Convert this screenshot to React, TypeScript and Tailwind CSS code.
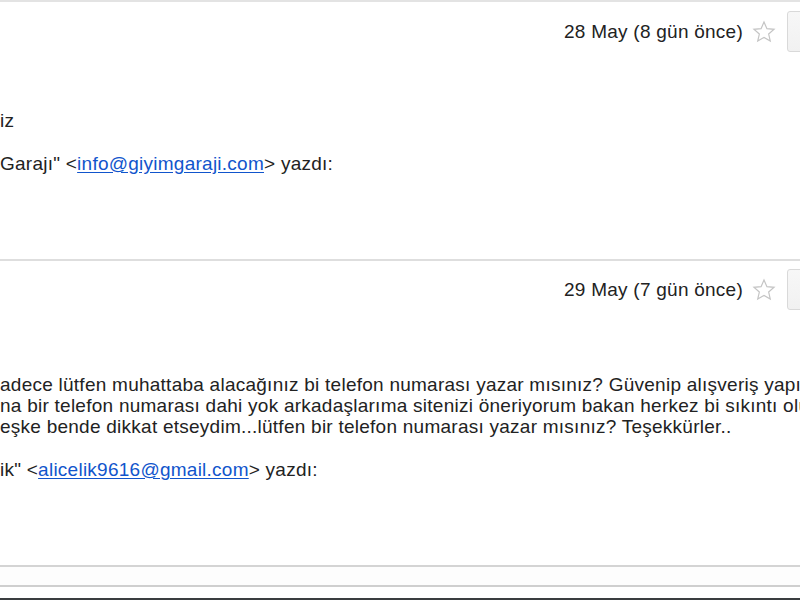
import React from "react";

function Star() {
    return (
        <svg width="26" height="26" viewBox="0 0 24 24" className="shrink-0">
            <path
                d="M12 2.8l2.7 6.1 6.6.6-5 4.4 1.5 6.5L12 17l-5.8 3.4 1.5-6.5-5-4.4 6.6-.6z"
                fill="none"
                stroke="#c4c4c4"
                strokeWidth="1.1"
                strokeLinejoin="miter"
            />
        </svg>
    );
}

function HeaderRow({ date }: { date: string }) {
    return (
        <div className="flex items-center justify-end h-[41px]">
            <span className="text-[#222] text-[19px] mr-[8px]">{date}</span>
            <Star />
            <div className="ml-[10px] w-[30px] h-[41px] -mr-[17px] rounded-[3px] border border-[#d9d9d9] bg-gradient-to-b from-[#f7f7f7] to-[#f1f1f1]" />
        </div>
    );
}

function Link({ children }: { children: React.ReactNode }) {
    return <a className="text-[#1155cc] underline underline-offset-2">{children}</a>;
}

export default function App() {
    return (
        <div
            className="w-[800px] h-[600px] bg-white overflow-hidden flex flex-col text-[19px] tracking-[0.25px] text-[#222] leading-[21px]"
            style={{ fontFamily: '"Liberation Sans", Arial, sans-serif' }}
        >
            {/* first message */}
            <div className="border-t-2 border-[#e3e3e3] h-[259px] shrink-0 pt-[9px] whitespace-nowrap">
                <HeaderRow date="28 May (8 gün önce)" />
                <div className="mt-[58px]">iz</div>
                <div className="mt-[22px]">
                    Garajı" &lt;<Link>info@giyimgaraji.com</Link>&gt; yazdı:
                </div>
            </div>

            {/* second message */}
            <div className="border-t-2 border-[#dedede] h-[306px] shrink-0 pt-[8px] whitespace-nowrap">
                <HeaderRow date="29 May (7 gün önce)" />
                <div className="mt-[64px]">
                    <div>adece lütfen muhattaba alacağınız bi telefon numarası yazar mısınız? Güvenip alışveriş yapı</div>
                    <div>na bir telefon numarası dahi yok arkadaşlarıma sitenizi öneriyorum bakan herkez bi sıkıntı olu</div>
                    <div>eşke bende dikkat etseydim...lütfen bir telefon numarası yazar mısınız? Teşekkürler..</div>
                </div>
                <div className="mt-[22px]">
                    ik" &lt;<Link>alicelik9616@gmail.com</Link>&gt; yazdı:
                </div>
            </div>

            {/* collapsed row */}
            <div className="border-t-2 border-[#d4d4d4] h-[20px] shrink-0 bg-[#fdfdfd]" />
            <div className="border-t-2 border-[#cfcfcf] flex-1 bg-white" />
            <div className="h-[2px] bg-[#3a3d40] shrink-0" />
        </div>
    );
}
